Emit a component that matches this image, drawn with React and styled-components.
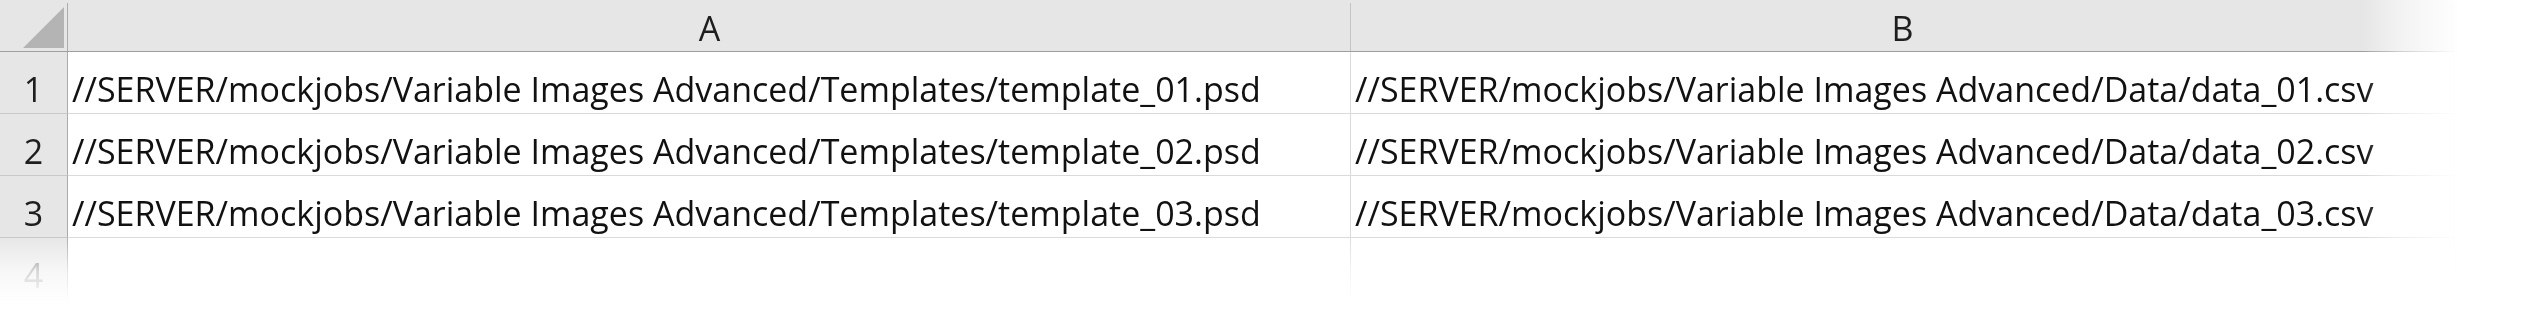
import styled, { createGlobalStyle } from "styled-components";

const GlobalStyle = createGlobalStyle`
  html, body {
    margin: 0;
    padding: 0;
    background: #ffffff;
  }
  body {
    font-family: "Open Sans", Lato, "Liberation Sans", sans-serif;
  }
`;

// the sheet fades out to the right and to the bottom
const Sheet = styled.div`
  width: 2528px;
  height: 326px;
  overflow: hidden;
  display: grid;
  grid-template-columns: 68px 1283px 1103px 1fr;
  grid-template-rows: 52px repeat(4, 62px) 1fr;
  mask-image: linear-gradient(
      to right,
      #000 2362px,
      rgba(0, 0, 0, 0.45) 2405px,
      transparent 2460px
    ),
    linear-gradient(
      to bottom,
      #000 236px,
      rgba(0, 0, 0, 0.3) 272px,
      transparent 303px
    );
  mask-composite: intersect;
`;

const Corner = styled.div`
  background: linear-gradient(#ababab, #ababab) right 3px / 1px calc(100% - 3px)
      no-repeat,
    #e6e6e6;
  border-bottom: 1px solid #9f9f9f;
  display: flex;
  svg {
    display: block;
  }
`;

const ColHead = styled.div`
  background: ${(p) =>
    p.$divider
      ? "linear-gradient(#c4c4c4, #c4c4c4) right 3px / 1px calc(100% - 3px) no-repeat, #e6e6e6"
      : "#e6e6e6"};
  border-bottom: 1px solid #9f9f9f;
  display: flex;
  align-items: flex-end;
  justify-content: center;
  padding-bottom: 0;
  font-size: 34px;
  color: #1e1e1e;
`;

const RowHead = styled.div`
  background: #e6e6e6;
  border-right: 1px solid #ababab;
  border-bottom: 1px solid #c8c8c8;
  display: flex;
  align-items: flex-end;
  justify-content: center;
  padding-bottom: 1px;
  font-size: 34px;
  color: ${(p) => (p.$muted ? "#7a7a7a" : "#1e1e1e")};
`;

const Cell = styled.div`
  background: #ffffff;
  border-right: 1px solid ${(p) => (p.$divider ? "#dadada" : "transparent")};
  border-bottom: 1px solid #dadada;
  display: flex;
  align-items: flex-end;
  padding: 0 0 1px 4px;
  font-size: 34px;
  color: #111111;
  white-space: nowrap;
  overflow: hidden;
`;

const Spacer = styled.div`
  background: ${(p) => (p.$head ? "#e6e6e6" : "#ffffff")};
  border-right: ${(p) => (p.$head ? "1px solid #ababab" : "none")};
`;

const base = "//SERVER/mockjobs/Variable Images Advanced";

const rows = [
  [`${base}/Templates/template_01.psd`, `${base}/Data/data_01.csv`],
  [`${base}/Templates/template_02.psd`, `${base}/Data/data_02.csv`],
  [`${base}/Templates/template_03.psd`, `${base}/Data/data_03.csv`],
  ["", ""],
];

const App = () => {
  return (
    <>
      <GlobalStyle />
      <Sheet>
        <Corner>
          <svg width="67" height="51" viewBox="0 0 67 51">
            <polygon points="23,48 64,48 64,7" fill="#b4b4b4" />
          </svg>
        </Corner>
        <ColHead $divider>A</ColHead>
        <ColHead $divider>B</ColHead>
        <ColHead />

        {rows.map((row, i) => (
          <>
            <RowHead key={`h${i}`} $muted={i === 3}>
              {i + 1}
            </RowHead>
            <Cell key={`a${i}`} $divider>
              {row[0]}
            </Cell>
            <Cell key={`b${i}`} $divider>
              {row[1]}
            </Cell>
            <Cell key={`c${i}`} />
          </>
        ))}

        <Spacer $head />
        <Spacer />
        <Spacer />
        <Spacer />
      </Sheet>
    </>
  );
};

export default App;
